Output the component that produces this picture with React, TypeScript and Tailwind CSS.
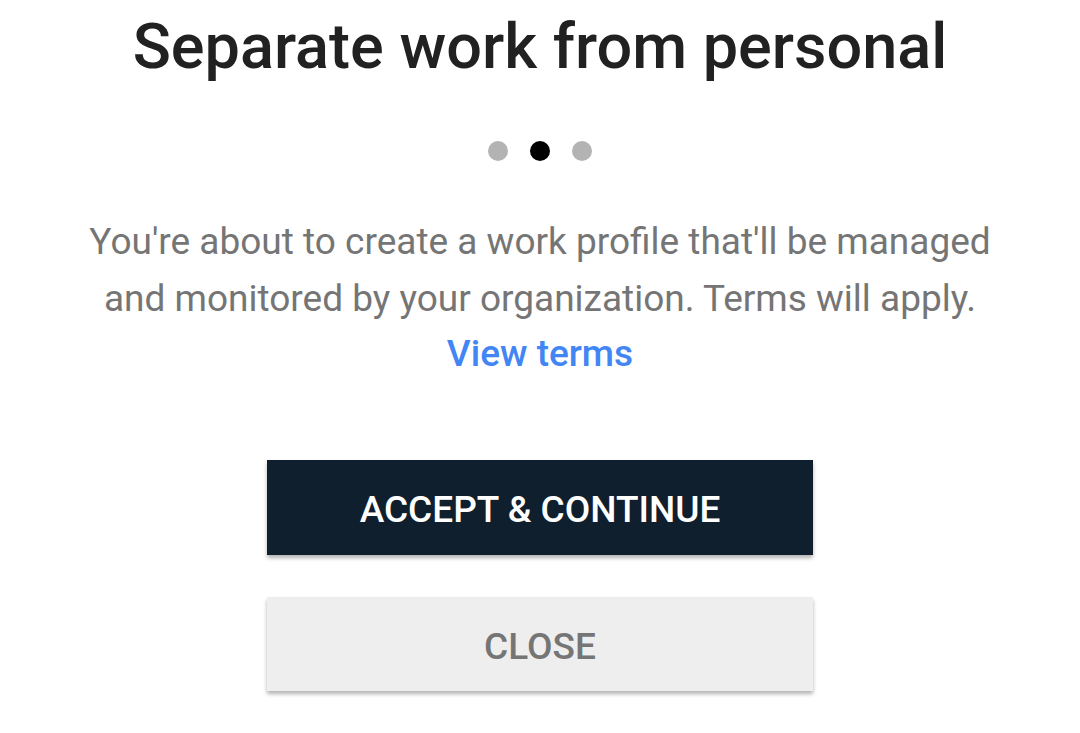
import React from "react";

export default function App() {
  return (
    <div
      className="w-[1080px] h-[733px] bg-white flex flex-col items-center overflow-hidden"
      style={{ fontFamily: "Roboto, 'Liberation Sans', sans-serif" }}
    >
      <h1 className="mt-[10px] text-[63px] leading-[74px] font-medium text-[#212121]">
        Separate work from personal
      </h1>
      <div className="mt-[57px] flex gap-[22px]">
        <span className="w-[20px] h-[20px] rounded-full bg-[#b3b3b3]" />
        <span className="w-[20px] h-[20px] rounded-full bg-black" />
        <span className="w-[20px] h-[20px] rounded-full bg-[#b3b3b3]" />
      </div>
      <p className="mt-[52px] w-[920px] text-center text-[37px] leading-[57px] text-[#757575]">
        You're about to create a work profile that'll be managed and monitored by your organization. Terms will apply.
      </p>
      <div className="text-[37px] leading-[53px] font-medium text-[#4285f4]">View terms</div>
      <button className="mt-[80px] w-[546px] h-[95px] pt-[5px] bg-[#0f1f2d] text-white text-[37px] font-medium shadow-[0_3px_4px_rgba(0,0,0,0.3)]">
        ACCEPT &amp; CONTINUE
      </button>
      <button className="mt-[42px] w-[546px] h-[94px] pt-[5px] bg-[#eeeeee] text-[#757575] text-[37px] font-medium shadow-[0_3px_4px_rgba(0,0,0,0.3)]">
        CLOSE
      </button>
    </div>
  );
}
